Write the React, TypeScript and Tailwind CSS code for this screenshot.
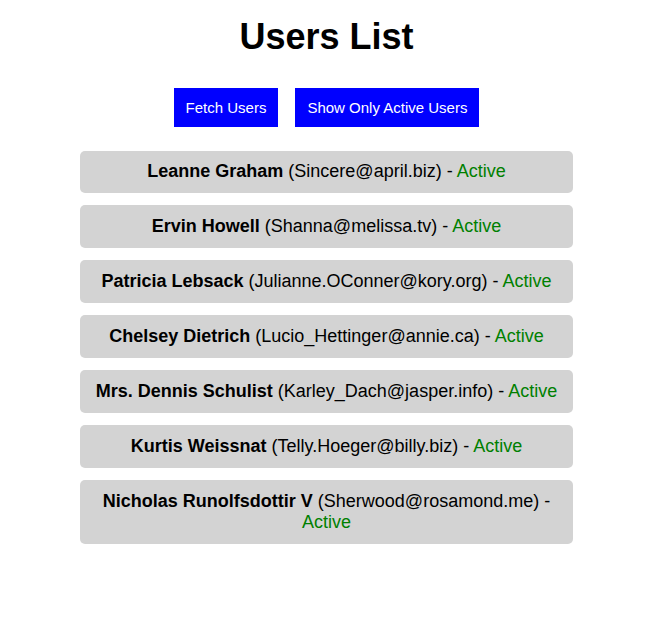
import React from 'react';

const users = [
  { name: 'Leanne Graham', email: 'Sincere@april.biz' },
  { name: 'Ervin Howell', email: 'Shanna@melissa.tv' },
  { name: 'Patricia Lebsack', email: 'Julianne.OConner@kory.org' },
  { name: 'Chelsey Dietrich', email: 'Lucio_Hettinger@annie.ca' },
  { name: 'Mrs. Dennis Schulist', email: 'Karley_Dach@jasper.info' },
  { name: 'Kurtis Weissnat', email: 'Telly.Hoeger@billy.biz' },
  { name: 'Nicholas Runolfsdottir V', email: 'Sherwood@rosamond.me' },
];

export default function App() {
  return (
    <div
      className="w-[653px] min-h-[623px] bg-white text-black text-center"
      style={{ fontFamily: '"Liberation Sans", Arial, sans-serif' }}
    >
      <h1 className="pt-[16px] text-[36px] font-bold leading-[41px]">Users List</h1>

      <div className="mt-[31px] flex justify-center gap-[17px]">
        <button className="bg-[#0000ff] text-white text-[15px] leading-[17px] px-[12px] py-[11px]">
          Fetch Users
        </button>
        <button className="bg-[#0000ff] text-white text-[15px] leading-[17px] px-[12px] py-[11px]">
          Show Only Active Users
        </button>
      </div>

      <ul className="mt-[23.5px] w-[493px] mx-auto flex flex-col gap-[12px]">
        {users.map((u) => (
          <li
            key={u.email}
            className="bg-[#d3d3d3] rounded-[5px] px-[10px] py-[10.8px] text-[18px] leading-[21.3px]"
          >
            <strong className="font-bold">{u.name}</strong> ({u.email}) -{' '}
            <span className="text-[#008000]">Active</span>
          </li>
        ))}
      </ul>
    </div>
  );
}
